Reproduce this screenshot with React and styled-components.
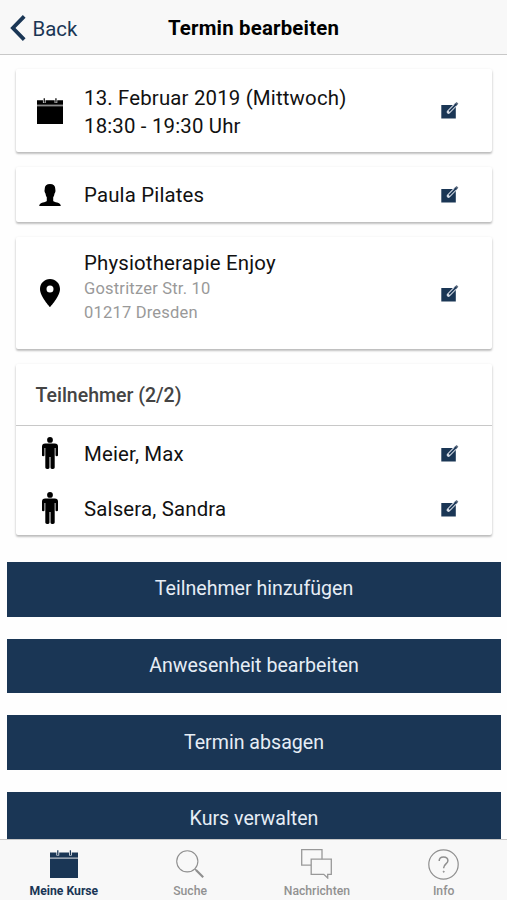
import styled, { createGlobalStyle } from "styled-components";

const NAVY = "#1a3655";

const App = () => {
    return (
        <>
            <GlobalStyle/>
            <ScreenS>
                <HeaderS>
                    <BackS>
                        <svg width="16" height="26" viewBox="0 0 16 26" fill="none" stroke={NAVY} strokeWidth="3.8">
                            <path d="M14.2 1.4 2.9 13 14.2 24.6"/>
                        </svg>
                        <BackTextS>Back</BackTextS>
                    </BackS>
                    <TitleS>Termin bearbeiten</TitleS>
                </HeaderS>

                <ContentS>
                    <CardS>
                        <RowS $height={83}>
                            <IconS><CalendarIcon/></IconS>
                            <TextS>
                                <LineS>13. Februar 2019 (Mittwoch)</LineS>
                                <LineS>18:30 - 19:30 Uhr</LineS>
                            </TextS>
                            <EditIcon/>
                        </RowS>
                    </CardS>

                    <CardS>
                        <RowS $height={55}>
                            <IconS><PersonIcon/></IconS>
                            <NameS><LineS>Paula Pilates</LineS></NameS>
                            <EditIcon/>
                        </RowS>
                    </CardS>

                    <CardS>
                        <RowS $height={112}>
                            <IconS><PinIcon/></IconS>
                            <AddressS>
                                <LineS>Physiotherapie Enjoy</LineS>
                                <SubLineS>Gostritzer Str. 10</SubLineS>
                                <SubLineS>01217 Dresden</SubLineS>
                            </AddressS>
                            <EditIcon/>
                        </RowS>
                    </CardS>

                    <CardS>
                        <CardHeadS>Teilnehmer (2/2)</CardHeadS>
                        {["Meier, Max", "Salsera, Sandra"].map((name) => (
                            <RowS key={name} $height={54.7}>
                                <IconS><ManIcon/></IconS>
                                <TextS><LineS>{name}</LineS></TextS>
                                <EditIcon/>
                            </RowS>
                        ))}
                    </CardS>

                    <ButtonsS>
                        <ButtonS>Teilnehmer hinzufügen</ButtonS>
                        <ButtonS>Anwesenheit bearbeiten</ButtonS>
                        <ButtonS>Termin absagen</ButtonS>
                        <ButtonS>Kurs verwalten</ButtonS>
                    </ButtonsS>
                </ContentS>

                <TabBarS>
                    <TabS $active>
                        <TabIconS><CalendarIcon color={NAVY} width={28}/></TabIconS>
                        Meine Kurse
                    </TabS>
                    <TabS>
                        <TabIconS><SearchIcon/></TabIconS>
                        Suche
                    </TabS>
                    <TabS>
                        <TabIconS><ChatIcon/></TabIconS>
                        Nachrichten
                    </TabS>
                    <TabS>
                        <TabIconS><HelpIcon/></TabIconS>
                        Info
                    </TabS>
                </TabBarS>
            </ScreenS>
        </>
    );
};

const CalendarIcon = ({ color = "#000", width = 26 }) => (
    <svg width={width} height={width} viewBox="0 0 28 28">
        <path fill={color} d="M0 2.4H28V7.4H0zM0 9H28V28H0z"/>
        <path fill={color} opacity=".45" d="M0 7.4H28V9H0z"/>
        <path stroke="#fff" strokeWidth="2.8" d="M7.8 0V5.4M20.4 0V5.4"/>
        <path stroke={color} strokeWidth="1.3" d="M7.8 .2V5M20.4 .2V5"/>
    </svg>
);

const PersonIcon = () => (
    <svg width="22" height="22" viewBox="0 0 22 22">
        <path d="M11 0C7.6 0 5.7 1.8 5.7 5c0 1-.4 1.5 0 2.9.2.8.6 1.1.8 1.7.3 1.7.6 2.8 1.300 3.700v3.400c-.4 1-2 1.300-3.900 1.700C1.700 18.900.3 19.700.2 22H21.800c-.1-2.300-1.500-3.100-3.700-3.600-1.900-.4-3.500-.7-3.900-1.700v-3.400c.7-.9 1-2 1.300-3.700.2-.6.6-.9.8-1.700.4-1.400 0-1.900 0-2.900C16.300 1.800 14.400 0 11 0z"/>
    </svg>
);

const PinIcon = () => (
    <svg width="20" height="28" viewBox="0 0 20 28">
        <path fillRule="evenodd" d="M10 0C4.4 0 0 4.4 0 9.9 0 17.3 10 28 10 28s10-10.700 10-18.100C20 4.400 15.600 0 10 0zm0 13.400a3.500 3.500 0 1 1 0-7 3.500 3.500 0 0 1 0 7z"/>
    </svg>
);

const ManIcon = () => (
    <svg width="16" height="32" viewBox="0 0 16 32">
        <circle cx="8" cy="2.9" r="2.9"/>
        <path d="M3.2 6.4H12.8Q16 6.4 16 9.6V18.2Q16 19.3 14.8 19.3T13.5 18.2V11H12.7V30.6Q12.7 32 11 32H9.9Q8.5 32 8.5 30.6V20H7.5V30.6Q7.5 32 6.1 32H5Q3.3 32 3.3 30.6V11H2.5V18.2Q2.5 19.3 1.2 19.3T0 18.2V9.6Q0 6.4 3.2 6.4z"/>
    </svg>
);

const EditIcon = () => (
    <svg width="18" height="17" viewBox="0 0 18 17">
        <path fill={NAVY} d="M.3 3H14.8V16.5H.3z"/>
        <path stroke="#d5dce6" strokeWidth="3.7" strokeLinecap="round" d="M7.5 10 14.6 2.7"/>
        <path stroke="#5b6a7d" strokeWidth="2.4" d="M14 3.3 16.5 .8"/>
        <path stroke={NAVY} strokeWidth="1.5" d="M8.1 9.4 15.3 2.1"/>
    </svg>
);

const SearchIcon = () => (
    <svg width="28" height="28" viewBox="0 0 28 28" fill="none" stroke="#8f8f8f">
        <circle cx="11.3" cy="11.3" r="10.6" strokeWidth="1.1"/>
        <path strokeWidth="1.1" d="M18.8 18.8 20.5 20.5"/>
        <path strokeWidth="2.2" d="M20 20 27.2 27.2"/>
    </svg>
);

const ChatIcon = () => (
    <svg width="31" height="30" viewBox="0 0 31 30" fill="none" stroke="#999" strokeWidth="1.3">
        <path d="M10.2 16.2H.7V.7H21V10.2"/>
        <path d="M10.2 10.2H30.3V25.3H26.7V29L22.8 25.3H10.2z"/>
    </svg>
);

const HelpIcon = () => (
    <svg width="31" height="31" viewBox="0 0 31 31" fill="none" stroke="#8f8f8f" strokeWidth="1.2">
        <circle cx="15.5" cy="15.5" r="14.7"/>
        <path strokeWidth="1.5" d="M11.2 11.9C11.2 9.3 13 7.9 15.5 7.9S19.9 9.4 19.9 11.7C19.9 14.7 15.7 15.2 15.7 18.8V19.3"/>
        <circle cx="15.7" cy="22.7" r=".6" fill="#8f8f8f" strokeWidth=".8"/>
    </svg>
);

const GlobalStyle = createGlobalStyle`
    * {
        box-sizing: border-box;
    }

    body {
        margin: 0;
        background: #fefefe;
        font-family: Roboto, "Liberation Sans", sans-serif;
    }

    svg {
        display: block;
        flex-shrink: 0;
    }
`;

const ScreenS = styled.div`
    width: 507px;
    height: 900px;
    display: flex;
    flex-direction: column;
    overflow: hidden;
`;

const HeaderS = styled.header`
    flex: 0 0 54.5px;
    display: grid;
    grid-template-columns: 1fr auto 1fr;
    align-items: center;
    padding: 0 10px;
    background: #f8f8f8;
    border-bottom: 1px solid #c8c8c8;
`;

const BackS = styled.div`
    display: flex;
    align-items: center;
    gap: 6.5px;
    padding-top: 2px;
    color: ${NAVY};
`;

const BackTextS = styled.span`
    padding-top: 2px;
    font-size: 20.4px;
`;

const TitleS = styled.h1`
    margin: 0;
    padding-top: 2px;
    font-size: 20.4px;
    font-weight: 700;
    letter-spacing: 0.2px;
    color: #000;
`;

const ContentS = styled.main`
    flex: 1;
    min-height: 0;
    display: flex;
    flex-direction: column;
    gap: 15px;
    padding-top: 14.5px;
    overflow: hidden;
`;

const CardS = styled.section`
    flex-shrink: 0;
    margin: 0 15px 0 16px;
    background: #fff;
    border-radius: 2px;
    box-shadow: 0 2px 2px rgba(0, 0, 0, 0.18), 0 1px 3px rgba(0, 0, 0, 0.14);
`;

const RowS = styled.div`
    height: ${(p) => p.$height}px;
    display: flex;
    align-items: center;
    padding: 0 33px 0 13px;
`;

const IconS = styled.div`
    width: 41px;
    margin-right: 14px;
    display: flex;
    justify-content: center;
`;

const TextS = styled.div`
    flex: 1;
    padding-top: 2px;
`;

const NameS = styled(TextS)`
    padding-top: 0;
`;

const AddressS = styled(TextS)`
    padding: 0 0 12px;
`;

const LineS = styled.div`
    font-size: 20.4px;
    line-height: 28px;
    letter-spacing: 0.17px;
    color: #111;
    white-space: nowrap;

    ${AddressS} & {
        line-height: 27px;
    }
`;

const SubLineS = styled.div`
    font-size: 16.5px;
    line-height: 23.5px;
    letter-spacing: 0.2px;
    color: #999;
`;

const CardHeadS = styled.h2`
    height: 62px;
    margin: 0;
    padding: 1px 19.5px 0;
    display: flex;
    align-items: center;
    border-bottom: 1px solid #c8c8c8;
    font-size: 19.5px;
    font-weight: 500;
    color: #444;
`;

const ButtonsS = styled.div`
    flex-shrink: 0;
    display: flex;
    flex-direction: column;
    gap: 22px;
    padding: 11.5px 6px 0 7px;
`;

const ButtonS = styled.button`
    height: 54.7px;
    padding: 0 0 1px;
    border: 0;
    background: ${NAVY};
    color: #e6edf5;
    font-family: inherit;
    font-size: 19.6px;
`;

const TabBarS = styled.nav`
    flex: 0 0 61px;
    display: grid;
    grid-template-columns: repeat(4, 1fr);
    background: #f8f8f8;
    border-top: 1px solid #c8c8c8;
`;

const TabS = styled.div`
    display: flex;
    flex-direction: column;
    align-items: center;
    padding-left: ${(p) => (p.$active ? 1 : 0)}px;
    font-size: 12.2px;
    line-height: 14px;
    font-weight: ${(p) => (p.$active ? 700 : 500)};
    color: ${(p) => (p.$active ? NAVY : "#919191")};
`;

const TabIconS = styled.div`
    height: 44px;
    padding-top: 4px;
    display: flex;
    align-items: center;
`;

export default App;
